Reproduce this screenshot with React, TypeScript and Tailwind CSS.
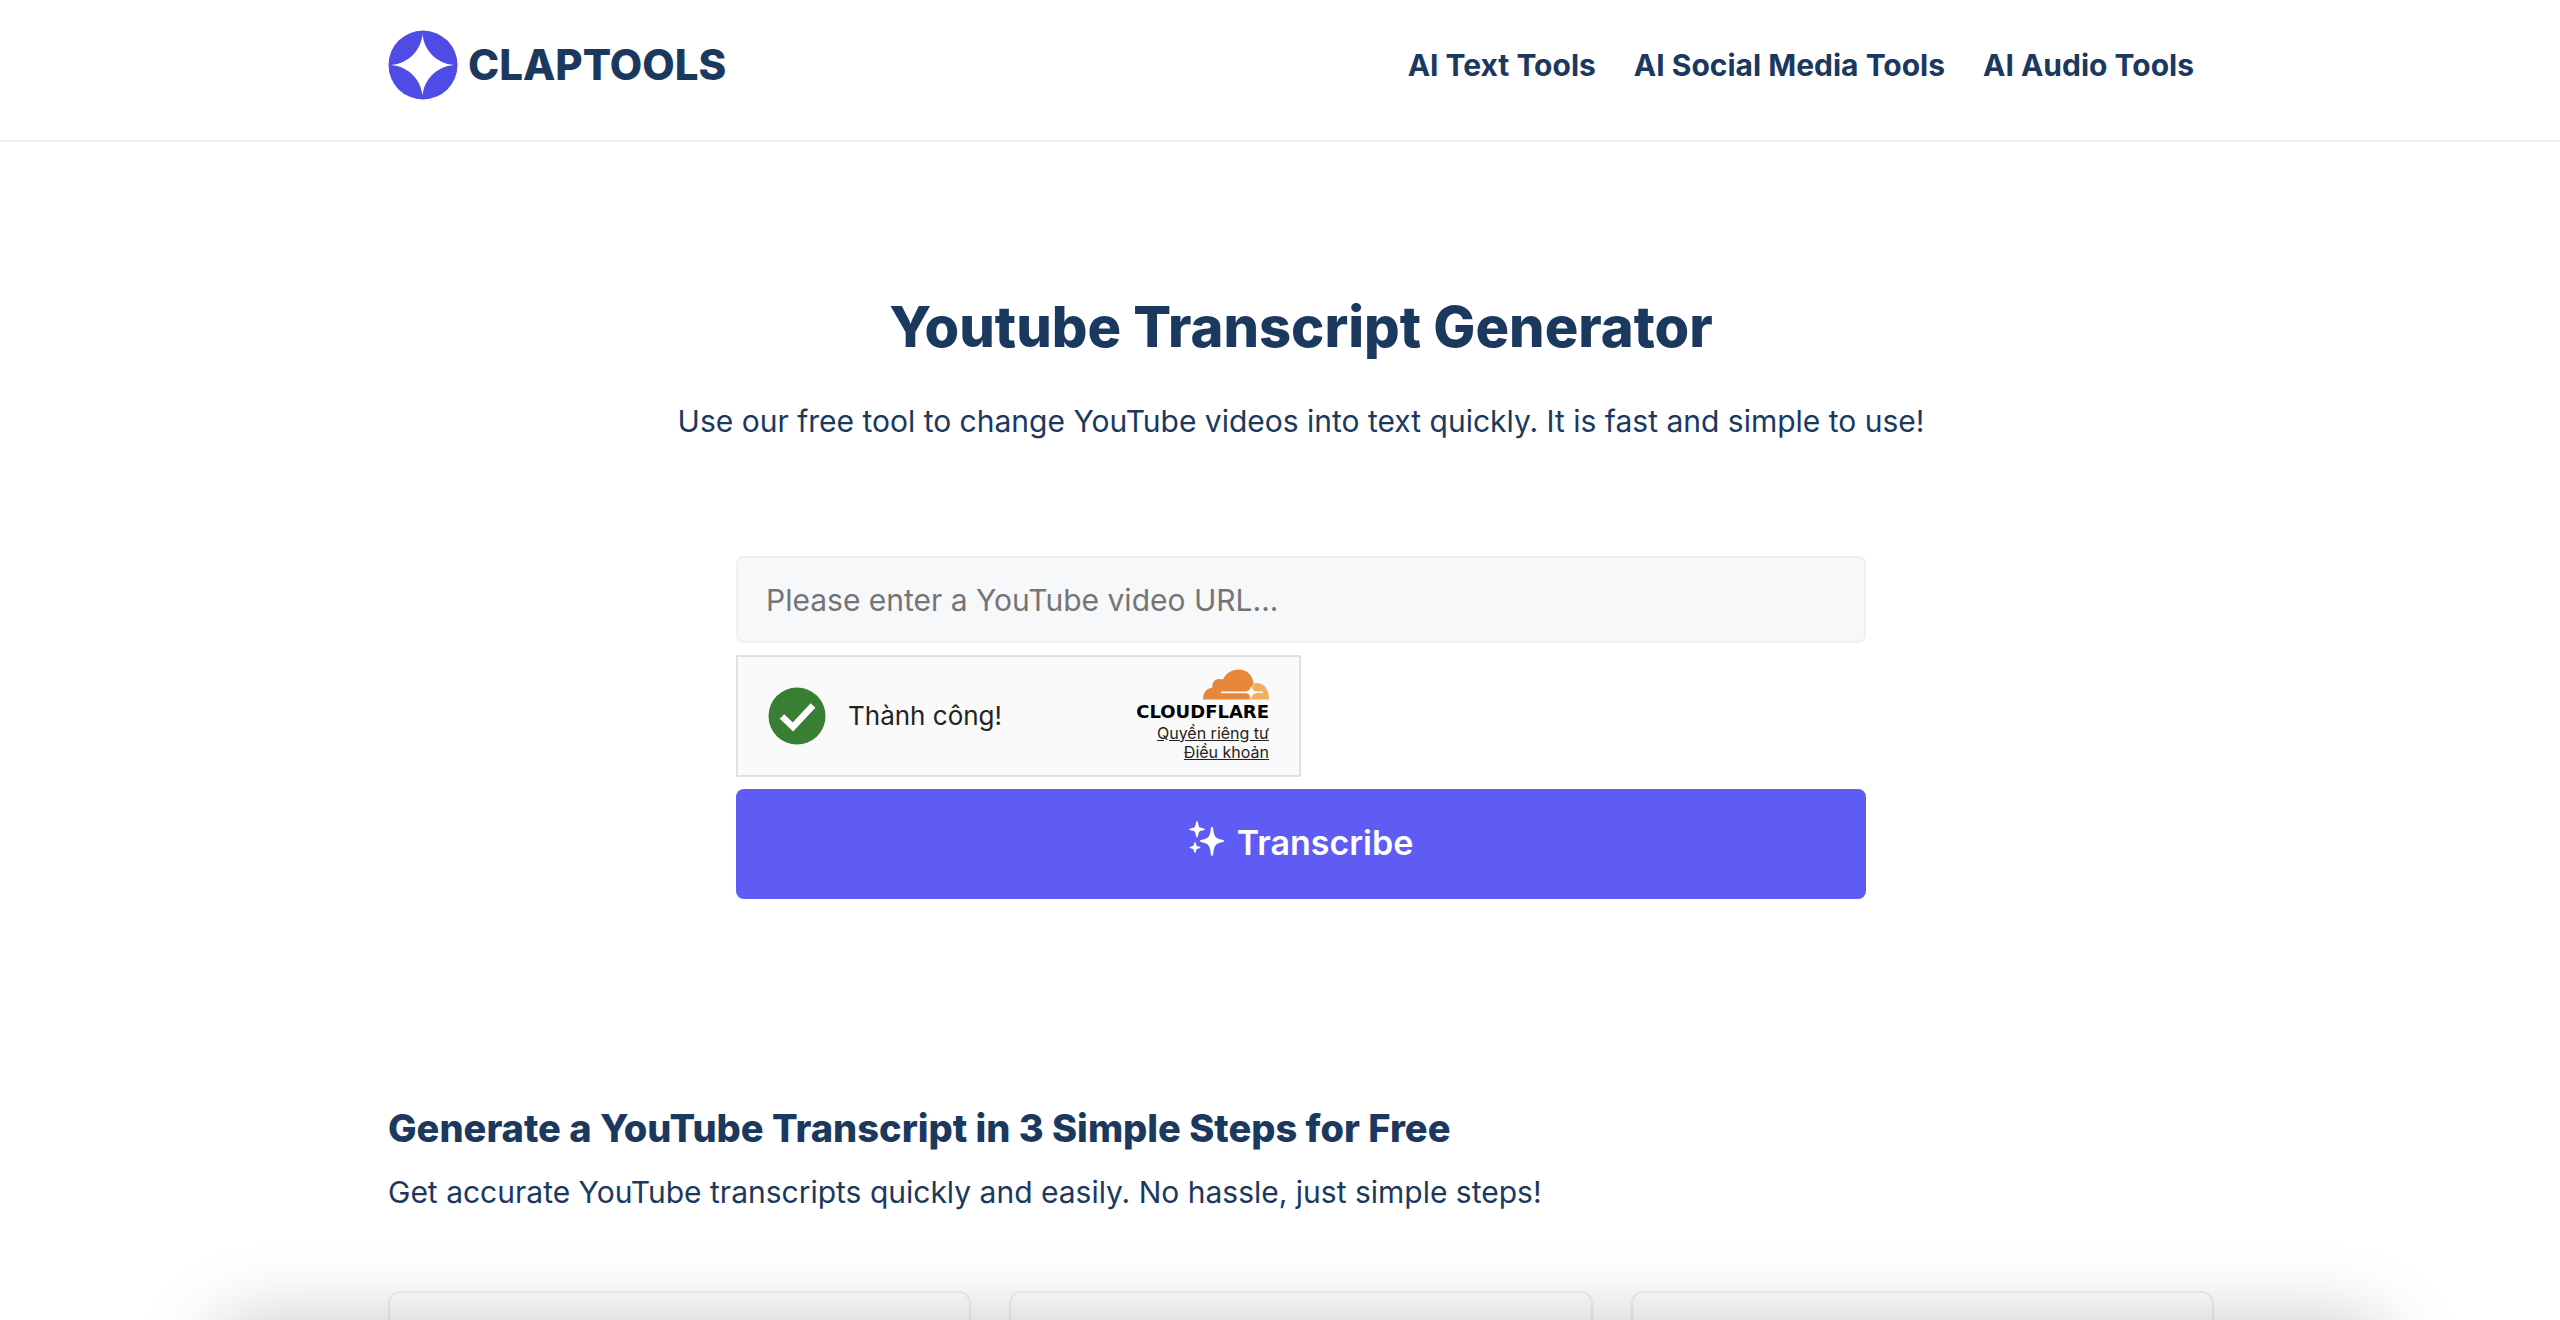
import React from "react";

const NAV = ["AI Text Tools", "AI Social Media Tools", "AI Audio Tools"];
const STEPS = ["Step 1", "Step 2", "Step 3"];

function Logo() {
  return (
    <a href="#" className="flex items-center gap-[10px]">
      <svg viewBox="0 0 70 70" className="size-[70px]" aria-hidden="true">
        <circle cx="35" cy="35" r="34.5" fill="#4f4be5" />
        <path d="M34.500 4C36 20 48 33.500 66 35C48 36.500 36 50 34.500 66C33 50 21 36.500 3 35C21 33.500 33 20 34.500 4Z" fill="#fff" />
      </svg>
      <span className="text-[42px] leading-none font-extrabold">CLAPTOOLS</span>
    </a>
  );
}

function CloudMark() {
  return (
    <svg viewBox="0 0 66 31" className="h-[31px] w-[66px]" aria-hidden="true">
      <path d="M0 30.500C0 24 3 19.500 9.500 18.500C8.500 12 14 8.500 20 10.500C23 4 29 0.500 35.500 0.500C44 0.500 49.500 6 50.500 14L46 30.500Z" fill="#e8873a" />
      <path d="M51.500 14C60 13 66 19 66 30.500H45.500Z" fill="#f1b057" />
      <path d="M18 22.500H43C46 22 47.500 20 48 17C48.800 20.500 50.500 22 53.500 22.500H60V24H53.500C50.500 24.500 48.800 27 48 30C47.500 27 46 24.500 43 24.200H18Z" fill="#fafafa" />
    </svg>
  );
}

function Sparkles() {
  return (
    <svg viewBox="0 0 36 36" className="mb-[6px] size-9" fill="#fff" aria-hidden="true">
      <path d="M23 6C23.800 6 24 6.500 24.200 8C25 15.500 26.500 17.500 33 18.800C36 19.400 36 20.600 33 21.200C26.500 22.500 25 24.500 24.200 33C24 35.500 22 35.500 21.800 33C21 24.500 19.500 22.500 13 21.200C10 20.600 10 19.400 13 18.800C19.500 17.500 21 15.500 21.800 8C22 6.500 22.200 6 23 6Z" />
      <path d="M8 0C9.200 0 9.300 5.500 10.500 6.200C11.500 6.900 16 7.300 16 8.300C16 9.300 11.500 9.700 10.500 10.400C9.300 11.100 9.200 16.500 8 16.500C6.800 16.500 6.700 11.100 5.500 10.400C4.500 9.700 0 9.300 0 8.300C0 7.300 4.500 6.900 5.500 6.200C6.700 5.500 6.800 0 8 0Z" />
      <path d="M6 21C7 21 7 24.500 8 25C9 25.500 11.500 25.700 11.500 26.500C11.500 27.300 9 27.500 8 28C7 28.500 7 32 6 32C5 32 5 28.500 4 28C3 27.500 0.500 27.300 0.500 26.500C0.500 25.700 3 25.500 4 25C5 24.500 5 21 6 21Z" />
    </svg>
  );
}

function Turnstile() {
  return (
    <div className="flex h-[122px] w-1/2 items-center justify-between border-2 border-[#e0e0e0] bg-[#fafafa] px-[30px]">
      <div className="flex items-center gap-[22px]">
        <svg viewBox="0 0 58 58" className="size-[58px]" aria-hidden="true">
          <circle cx="29" cy="29" r="28.5" fill="#387f33" />
          <path d="M14 29.500L25 40L45 18.500" fill="none" stroke="#fff" strokeWidth="6.500" />
        </svg>
        <span className="text-[26px] leading-8 text-[#232323]">Thành công!</span>
      </div>
      <div className="flex flex-col items-end pb-[2px] text-[#232323]">
        <CloudMark />
        <span className="font-['DejaVu_Sans',sans-serif] text-[18px] leading-6 font-bold text-black">CLOUDFLARE</span>
        <a href="#" className="text-[16px] leading-[19px] underline">Quyền riêng tư</a>
        <a href="#" className="text-[16px] leading-[19px] underline">Điều khoản</a>
      </div>
    </div>
  );
}

export default function App() {
  return (
    <div className="relative h-screen overflow-hidden bg-white font-['Inter',sans-serif] text-[#1b395e]">
      <header className="border-b-2 border-[#f0f0f0] pl-[42px]">
        <div className="mx-auto flex h-[140px] max-w-[1826px] items-start justify-between pt-[30px] pr-5">
          <Logo />
          <nav className="flex h-[70px] items-center gap-[38px] text-[30px] leading-9 font-bold">
            {NAV.map((label) => (
              <a key={label} href="#">{label}</a>
            ))}
          </nav>
        </div>
      </header>
      <main className="pl-[42px]">
        <section className="flex flex-col items-center pt-[150px] text-center">
          <h1 className="text-[56px] leading-[70px] font-extrabold">Youtube Transcript Generator</h1>
          <p className="mt-[40px] text-[30px] leading-[38px]">
            Use our free tool to change YouTube videos into text quickly. It is fast and simple to use!
          </p>
          <form className="mt-[116px] flex w-full max-w-[1130px] flex-col text-left" onSubmit={(e) => e.preventDefault()}>
            <input
              type="text"
              aria-label="YouTube video URL"
              placeholder="Please enter a YouTube video URL..."
              className="h-[87px] rounded-lg border-2 border-[#f0f0f0] bg-[#f7f8fa] px-7 text-[30px] placeholder:text-[#757575]"
            />
            <div className="my-3">
              <Turnstile />
            </div>
            <button type="submit" className="flex h-[110px] items-center justify-center gap-3 rounded-lg bg-[#5f5cf6] pb-1 text-[34px] font-semibold text-white">
              <Sparkles />
              Transcribe
            </button>
          </form>
        </section>
        <section className="mx-auto mt-[205px] max-w-[1826px]">
          <h2 className="text-[38px] leading-[48px] font-extrabold">Generate a YouTube Transcript in 3 Simple Steps for Free</h2>
          <p className="mt-[21px] text-[30px] leading-[38px]">Get accurate YouTube transcripts quickly and easily. No hassle, just simple steps!</p>
          <div className="mt-20 grid grid-cols-3 gap-[38px]">
            {STEPS.map((step) => (
              <article key={step} aria-label={step} className="h-[300px] rounded-xl border-2 border-[#f0f0f0]" />
            ))}
          </div>
        </section>
      </main>
      <div className="pointer-events-none absolute top-full right-[175px] left-[215px] h-[400px] rounded-[40px] shadow-[0_6px_80px_rgba(0,0,0,0.26)]" />
    </div>
  );
}
